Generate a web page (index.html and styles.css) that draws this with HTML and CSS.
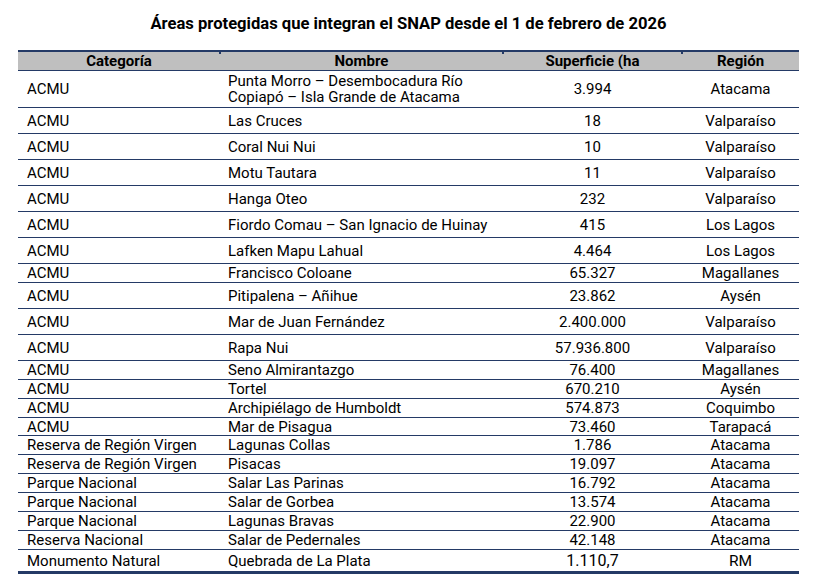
FILE: index.html
```html
<!DOCTYPE html>
<html lang="es">
<head>
<meta charset="utf-8">
<title>Áreas protegidas SNAP</title>
<link rel="stylesheet" href="styles.css">
</head>
<body>
<main class="page">
  <h1 class="title">Áreas protegidas que integran el SNAP desde el 1 de febrero de 2026</h1>
  <table class="areas">
    <colgroup>
      <col class="c-cat">
      <col class="c-nom">
      <col class="c-sup">
      <col class="c-reg">
    </colgroup>
    <thead>
      <tr>
        <th>Categoría</th>
        <th class="tick">Nombre</th>
        <th class="tick">Superficie (ha</th>
        <th class="tick">Región</th>
      </tr>
    </thead>
    <tbody>
      <tr class="r-double"><td>ACMU</td><td class="two-line">Punta Morro – Desembocadura Río<br>Copiapó – Isla Grande de Atacama</td><td class="num">3.994</td><td class="reg">Atacama</td></tr>
      <tr class="r-tall"><td>ACMU</td><td>Las Cruces</td><td class="num">18</td><td class="reg">Valparaíso</td></tr>
      <tr class="r-tall"><td>ACMU</td><td>Coral Nui Nui</td><td class="num">10</td><td class="reg">Valparaíso</td></tr>
      <tr class="r-tall"><td>ACMU</td><td>Motu Tautara</td><td class="num">11</td><td class="reg">Valparaíso</td></tr>
      <tr class="r-tall"><td>ACMU</td><td>Hanga Oteo</td><td class="num">232</td><td class="reg">Valparaíso</td></tr>
      <tr class="r-mid"><td>ACMU</td><td>Fiordo Comau – San Ignacio de Huinay</td><td class="num">415</td><td class="reg">Los Lagos</td></tr>
      <tr class="r-tall"><td>ACMU</td><td>Lafken Mapu Lahual</td><td class="num">4.464</td><td class="reg">Los Lagos</td></tr>
      <tr class="r-short"><td>ACMU</td><td>Francisco Coloane</td><td class="num">65.327</td><td class="reg">Magallanes</td></tr>
      <tr class="r-tall"><td>ACMU</td><td>Pitipalena – Añihue</td><td class="num">23.862</td><td class="reg">Aysén</td></tr>
      <tr class="r-tall"><td>ACMU</td><td>Mar de Juan Fernández</td><td class="num">2.400.000</td><td class="reg">Valparaíso</td></tr>
      <tr class="r-mid"><td>ACMU</td><td>Rapa Nui</td><td class="num">57.936.800</td><td class="reg">Valparaíso</td></tr>
      <tr class="r-short"><td>ACMU</td><td>Seno Almirantazgo</td><td class="num">76.400</td><td class="reg">Magallanes</td></tr>
      <tr class="r-short"><td>ACMU</td><td>Tortel</td><td class="num">670.210</td><td class="reg">Aysén</td></tr>
      <tr class="r-short"><td>ACMU</td><td>Archipiélago de Humboldt</td><td class="num">574.873</td><td class="reg">Coquimbo</td></tr>
      <tr class="r-slim"><td>ACMU</td><td>Mar de Pisagua</td><td class="num">73.460</td><td class="reg">Tarapacá</td></tr>
      <tr class="r-short"><td>Reserva de Región Virgen</td><td>Lagunas Collas</td><td class="num">1.786</td><td class="reg">Atacama</td></tr>
      <tr class="r-short"><td>Reserva de Región Virgen</td><td>Pisacas</td><td class="num">19.097</td><td class="reg">Atacama</td></tr>
      <tr class="r-short"><td>Parque Nacional</td><td>Salar Las Parinas</td><td class="num">16.792</td><td class="reg">Atacama</td></tr>
      <tr class="r-short"><td>Parque Nacional</td><td>Salar de Gorbea</td><td class="num">13.574</td><td class="reg">Atacama</td></tr>
      <tr class="r-short"><td>Parque Nacional</td><td>Lagunas Bravas</td><td class="num">22.900</td><td class="reg">Atacama</td></tr>
      <tr class="r-short"><td>Reserva Nacional</td><td>Salar de Pedernales</td><td class="num">42.148</td><td class="reg">Atacama</td></tr>
      <tr class="r-last"><td>Monumento Natural</td><td>Quebrada de La Plata</td><td class="num num-big">1.110,7</td><td class="reg reg-big">RM</td></tr>
    </tbody>
  </table>
</main>
</body>
</html>
```

FILE: styles.css
```css
html, body {
  margin: 0;
  padding: 0;
  background: #ffffff;
}

.page {
  padding: 14px 0 0 18px;
  width: 781px;
  font-family: Roboto, "Liberation Sans", sans-serif;
  color: #000000;
}

.title {
  margin: 0 0 16px 0;
  font-size: 16.6px;
  line-height: 20px;
  font-weight: 700;
  text-align: center;
}

.areas {
  width: 781px;
  table-layout: fixed;
  border-collapse: separate;
  border-spacing: 0;
  font-size: 15px;
  border-top: 2px solid #243a66;
  border-bottom: 3px solid #243a66;
}

.c-cat { width: 202px; }
.c-nom { width: 283px; }
.c-sup { width: 179px; }
.c-reg { width: 117px; }

.areas th {
  position: relative;
  background: #bfbfbf;
  font-weight: 700;
  text-align: center;
  height: 18px;
  line-height: 16px;
  padding: 0;
  border-bottom: 1px solid #243a66;
}

.areas th.tick::before {
  content: "";
  position: absolute;
  left: -1px;
  top: 0;
  width: 2px;
  height: 2px;
  background: #243a66;
}

.areas td {
  padding: 0 0 0 9px;
  line-height: 16px;
  vertical-align: middle;
  border-bottom: 1px solid #243a66;
  white-space: nowrap;
}

.areas td:nth-child(2) {
  padding-left: 8px;
}

.areas td.num,
.areas td.reg {
  padding: 0;
  text-align: center;
}

.areas td.two-line {
  line-height: 16px;
}

.r-double td { height: 36px; }
.r-tall td { height: 25px; }
.r-mid td { height: 25px; }
.r-short td { height: 18px; }
.r-slim td { height: 17px; }
.r-last td {
  height: 21px;
  border-bottom: none;
}

.num-big {
  font-size: 16px;
}

.reg-big {
  font-size: 15.5px;
}
```
